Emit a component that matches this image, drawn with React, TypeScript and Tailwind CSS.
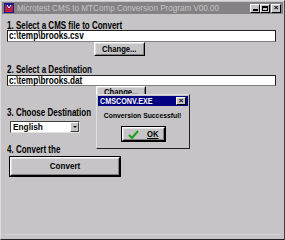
import React from "react";

const font = { fontFamily: '"Liberation Sans", Arial, sans-serif' };

function Raised({ children, className = "" }: { children?: React.ReactNode; className?: string }) {
  return (
    <div className={`border border-t-white border-l-white border-r-[#000] border-b-[#000] ${className}`}>
      <div className="w-full h-full border border-t-[#dfdfdf] border-l-[#dfdfdf] border-r-[#808080] border-b-[#808080] flex items-center justify-center">
        {children}
      </div>
    </div>
  );
}

function TitleBtn({ children }: { children: React.ReactNode }) {
  return (
    <div className="w-[10px] h-[9px] bg-[#c6c3c6] border border-t-white border-l-white border-r-black border-b-black flex items-center justify-center text-black text-[8px] leading-none font-bold">
      {children}
    </div>
  );
}

function Label({ children, className = "" }: { children: React.ReactNode; className?: string }) {
  return (
    <div className={`text-[10px] leading-[10px] whitespace-nowrap ${className}`}>
      <span className="inline-block scale-x-[0.8] origin-left">{children}</span>
    </div>
  );
}

export default function App() {
  return (
    <div style={font} className="relative w-[285px] h-[240px] bg-[#c6c4c6] border border-t-[#dcdcdc] border-l-[#dcdcdc] border-r-[#404040] border-b-[#202020] overflow-hidden flex flex-col">
      <div className="mx-[1px] mt-[1px] h-[12px] shrink-0 bg-[#848284] flex items-center pl-[2px] pr-[2px]">
        <svg width="10" height="10" viewBox="0 0 10 10" className="shrink-0">
          <rect x="0" y="0" width="10" height="10" fill="#1a1a8a" />
          <path d="M1 1 L5 6 L9 1 L9 9 L1 9 Z" fill="#c02040" />
          <path d="M3 2 L5 5 L7 2" stroke="#fff" strokeWidth="1" fill="none" />
        </svg>
        <span className="ml-[3px] text-[9px] leading-none text-[#c6c3c6] whitespace-nowrap scale-x-[0.9] origin-left inline-block">
          Microtest CMS to MTComp Conversion Program V00.00
        </span>
        <div className="ml-auto flex items-center">
          <TitleBtn>
            <span className="block w-[5px] h-[2px] bg-black mt-[4px]" />
          </TitleBtn>
          <TitleBtn>
            <span className="block w-[6px] h-[5px] border border-black border-t-2" />
          </TitleBtn>
          <div className="ml-[1px]">
            <TitleBtn>×</TitleBtn>
          </div>
        </div>
      </div>

      <div className="pl-[6px] pr-[8px] pt-[7px] font-bold text-black">
        <Label className="h-[9px]">1. Select a CMS file to Convert</Label>
        <div className="h-[12px] bg-white border border-[#202020] border-b-[#808080] flex items-center pl-[1px] text-[10px] leading-none">
          <span className="scale-x-[0.82] origin-left inline-block whitespace-nowrap">c:\temp\brooks.csv</span>
        </div>
        <div className="pl-[87px]">
          <Raised className="w-[51px] h-[14px]">
            <span className="text-[9px] leading-none scale-x-[0.85] inline-block whitespace-nowrap">Change...</span>
          </Raised>
        </div>

        <Label className="mt-[9px] h-[10px]">2. Select a Destination</Label>
        <div className="h-[11px] bg-white border border-[#202020] border-b-[#808080] flex items-center pl-[1px] text-[10px] leading-none">
          <span className="scale-x-[0.82] origin-left inline-block whitespace-nowrap">c:\temp\brooks.dat</span>
        </div>
        <div className="pl-[89px]">
          <Raised className="w-[50px] h-[13px]">
            <span className="text-[9px] leading-none scale-x-[0.85] inline-block whitespace-nowrap">Change...</span>
          </Raised>
        </div>

        <Label className="mt-[9px] h-[10px]">3. Choose Destination</Label>
        <div className="ml-[3px] mt-[3px] w-[70px] h-[12px] bg-white border border-t-[#404040] border-l-[#404040] border-r-[#e0e0e0] border-b-[#e0e0e0] flex items-center">
          <span className="pl-[2px] text-[9px] leading-none flex-1 whitespace-nowrap">
            <span className="inline-block scale-x-[0.92] origin-left">English</span>
          </span>
          <div className="w-[9px] h-[10px] bg-[#c6c3c6] border border-t-white border-l-white border-r-[#404040] border-b-[#404040] flex items-center justify-center">
            <span className="block w-0 h-0 border-l-[2px] border-r-[2px] border-t-[2px] border-l-transparent border-r-transparent border-t-black" />
          </div>
        </div>

        <Label className="mt-[12px] h-[10px]">4. Convert the</Label>
        <div className="ml-[2px] mt-[1px] w-[112px] h-[21px] border border-black">
          <Raised className="w-full h-full">
            <span className="text-[9px] leading-none scale-x-[0.9] inline-block">Convert</span>
          </Raised>
        </div>
      </div>

      <div className="mt-auto mb-[4px] mx-[4px] h-[1px] bg-[#d6d4d6]" />

      {/* dialog */}
      <div className="absolute left-[95px] top-[93px] w-[94px] h-[55px] bg-[#c6c4c6] border border-t-[#e0e0e0] border-l-[#e0e0e0] border-r-[#202020] border-b-[#202020]">
        <div className="mx-[1px] mt-[1px] h-[10px] bg-[#000080] flex items-center pl-[2px] pr-[2px]">
          <span className="text-[9px] font-bold text-white leading-none scale-x-[0.8] origin-left inline-block whitespace-nowrap">CMSCONV.EXE</span>
          <div className="ml-auto w-[10px] h-[8px] bg-[#c6c3c6] border border-t-white border-l-white border-r-black border-b-black flex items-center justify-center text-[8px] font-bold leading-none">×</div>
        </div>
        <div className="mt-[6px] h-[8px] flex justify-center text-[8px] font-bold leading-none whitespace-nowrap">
          <span className="inline-block scale-x-[0.85]">Conversion Successful!</span>
        </div>
        <div className="mt-[6px] ml-[24px] w-[45px] h-[16px] border border-black">
          <Raised className="w-full h-full">
            <div className="flex items-center gap-[7px]">
              <svg width="11" height="9" viewBox="0 0 11 9">
                <path d="M1 5 L4 8 L10 1" stroke="#18a018" strokeWidth="2" fill="none" />
              </svg>
              <span className="text-[9px] font-bold leading-none underline decoration-[0.5px] scale-x-[0.85] inline-block">OK</span>
            </div>
          </Raised>
        </div>
      </div>
    </div>
  );
}
